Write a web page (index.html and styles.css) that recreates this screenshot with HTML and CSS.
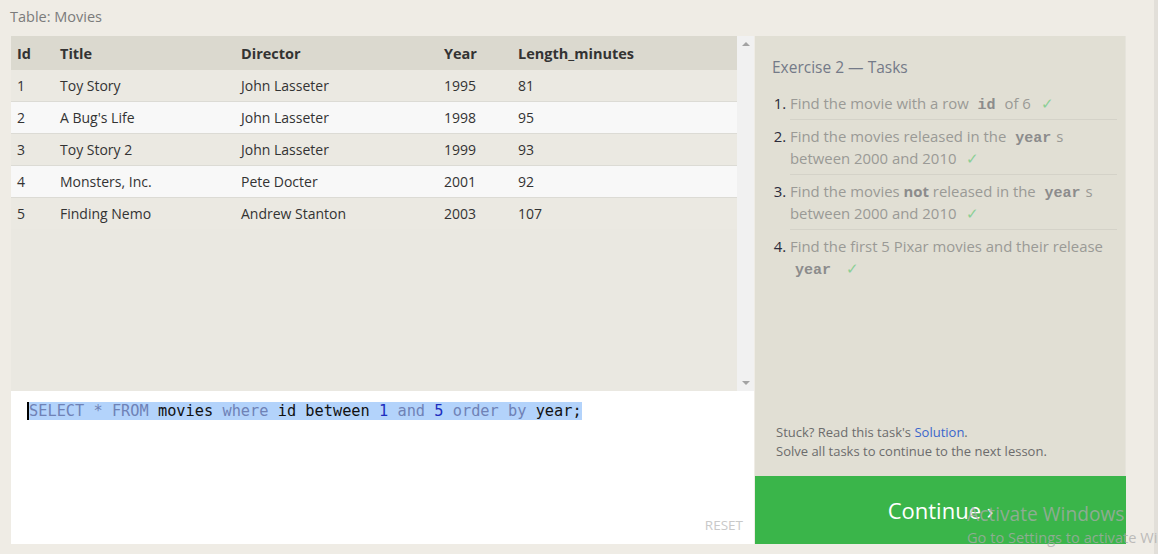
FILE: index.html
```html
<!DOCTYPE html>
<html lang="en">
<head>
<meta charset="utf-8">
<title>SQL Lesson</title>
<link rel="stylesheet" href="styles.css">
</head>
<body>
<div class="page">
  <div class="caption">Table: Movies</div>
  <div class="main">
    <div class="left">
      <div class="table-area">
        <div class="table-wrap">
          <table class="grid">
            <colgroup>
              <col class="c-id"><col class="c-title"><col class="c-dir"><col class="c-year"><col>
            </colgroup>
            <thead>
              <tr><th>Id</th><th>Title</th><th>Director</th><th>Year</th><th>Length_minutes</th></tr>
            </thead>
            <tbody>
              <tr><td>1</td><td>Toy Story</td><td>John Lasseter</td><td>1995</td><td>81</td></tr>
              <tr><td>2</td><td>A Bug's Life</td><td>John Lasseter</td><td>1998</td><td>95</td></tr>
              <tr><td>3</td><td>Toy Story 2</td><td>John Lasseter</td><td>1999</td><td>93</td></tr>
              <tr><td>4</td><td>Monsters, Inc.</td><td>Pete Docter</td><td>2001</td><td>92</td></tr>
              <tr><td>5</td><td>Finding Nemo</td><td>Andrew Stanton</td><td>2003</td><td>107</td></tr>
            </tbody>
          </table>
        </div>
        <div class="scrollbar">
          <span class="arrow up"></span>
          <span class="arrow down"></span>
        </div>
      </div>
      <div class="editor">
        <div class="code"><span class="sel"><span class="kw">SELECT * FROM</span> movies <span class="kw">where</span> id between <span class="num">1</span> <span class="kw">and</span> <span class="num">5</span> <span class="kw">order by</span> year;</span></div>
        <div class="reset">RESET</div>
      </div>
    </div>
    <div class="right">
      <div class="tasks">
        <div class="tasks-title">Exercise 2 — Tasks</div>
        <ol class="task-list">
          <li>Find the movie with a row <code>id</code> of 6 <span class="check">✓</span></li>
          <li>Find the movies released in the <code>year</code>s between 2000 and 2010 <span class="check">✓</span></li>
          <li>Find the movies <strong>not</strong> released in the <code>year</code>s between 2000 and 2010 <span class="check">✓</span></li>
          <li>Find the first 5 Pixar movies and their release <code>year</code> <span class="check">✓</span></li>
        </ol>
        <div class="help">
          <div>Stuck? Read this task's <a class="link">Solution</a>.</div>
          <div>Solve all tasks to continue to the next lesson.</div>
        </div>
      </div>
      <div class="continue">Continue ›</div>
    </div>
  </div>
</div>
<div class="watermark">
  <div class="wm-1">Activate Windows</div>
  <div class="wm-2">Go to Settings to activate Windows.</div>
</div>
</body>
</html>
```
FILE: styles.css
```css
html, body {
  margin: 0;
  padding: 0;
}
body {
  background: #efece5;
  font-family: "Open Sans", "Noto Sans", sans-serif;
  color: #333;
  width: 1158px;
  height: 554px;
  overflow: hidden;
  position: relative;
}
.page {
  box-sizing: border-box;
  height: 554px;
  width: 1158px;
  border-right: 4px solid #e2dfd9;
  padding: 0 0 0 11px;
}
.caption {
  height: 36px;
  line-height: 33px;
  margin-left: -1px;
  font-size: 14.5px;
  color: #7b7b7b;
}
.main {
  display: flex;
  height: 508px;
  gap: 1px;
}
.left {
  width: 743px;
  display: flex;
  flex-direction: column;
}
.table-area {
  height: 355px;
  display: flex;
  background: #eae8e1;
}
.table-wrap {
  flex: 1;
}
.grid {
  width: 100%;
  border-collapse: collapse;
  table-layout: fixed;
}
.c-id { width: 43px; }
.c-title { width: 181px; }
.c-dir { width: 203px; }
.c-year { width: 74px; }
.grid th {
  background: #dbd9cf;
  height: 34px;
  padding: 0 0 0 6px;
  text-align: left;
  font-weight: 700;
  font-size: 14.5px;
  color: #333;
}
.grid td {
  height: 31px;
  padding: 0 0 0 6px;
  font-size: 14px;
  color: #333;
  border-bottom: 1px solid #dcdbd5;
}
.grid tbody tr:nth-child(odd) { background: #ebe9e2; }
.grid tbody tr:nth-child(even) { background: #f8f8f8; }
.grid tbody tr:last-child td { border-bottom: none; }
.scrollbar {
  width: 17px;
  background: #f1f1f1;
  display: flex;
  flex-direction: column;
  justify-content: space-between;
  align-items: center;
  padding: 6px 0;
  box-sizing: border-box;
}
.arrow {
  width: 0;
  height: 0;
  border-left: 4px solid transparent;
  border-right: 4px solid transparent;
}
.arrow.up { border-bottom: 4px solid #a3a3a3; }
.arrow.down { border-top: 4px solid #a3a3a3; }
.editor {
  flex: 1;
  background: #fff;
  display: flex;
  flex-direction: column;
  padding: 11px 11px 10px 16px;
}
.code {
  font-family: "DejaVu Sans Mono", "Liberation Mono", monospace;
  font-size: 15.3px;
  line-height: 19px;
  color: #111;
  white-space: pre;
}
.sel {
  background: #b3d3fb;
  border-left: 2px solid #000;
}
.kw { color: #6f82b6; }
.num { color: #1d2ec0; }
.reset {
  margin-top: auto;
  align-self: flex-end;
  font-size: 13.5px;
  color: #c9c9c9;
}
.right {
  width: 371px;
  display: flex;
  flex-direction: column;
}
.tasks {
  height: 440px;
  box-sizing: border-box;
  background: #e1dfd4;
  border-right: 1px solid #e6e4dc;
  padding: 20px 8px 15px 17px;
  display: flex;
  flex-direction: column;
}
.tasks-title {
  font-size: 15.5px;
  line-height: 22px;
  color: #747a88;
}
.task-list {
  margin: 9px 0 0 0;
  padding: 0 0 0 18px;
  font-size: 14.9px;
  line-height: 22px;
  color: #9a9a96;
}
.task-list li {
  padding: 5px 0;
  border-bottom: 1px solid #d4d2c8;
}
.task-list li:last-child { border-bottom: none; }
.task-list li::marker { color: #2b2b3a; }
.task-list code {
  font-family: "Liberation Mono", "DejaVu Sans Mono", monospace;
  font-weight: 700;
  font-size: 15px;
  line-height: 1;
  color: #8c8c8c;
  padding: 0 5px;
}
.task-list strong { color: #8c8c8c; }
.check {
  color: #8bcf96;
  margin-left: 6px;
}
.help {
  margin-top: auto;
  padding-left: 4px;
  font-size: 13px;
  line-height: 19px;
  color: #6c6c6c;
}
.link { color: #3a66cc; }
.continue {
  flex: 1;
  background: #3ab54a;
  color: #fff;
  font-size: 22px;
  display: flex;
  align-items: center;
  justify-content: center;
}
.watermark {
  position: absolute;
  left: 967px;
  top: 501px;
  pointer-events: none;
  white-space: nowrap;
  color: rgba(170, 170, 170, 0.75);
}
.wm-1 { font-size: 19.2px; line-height: 26px; }
.wm-2 { font-size: 14.6px; line-height: 20px; }
```
